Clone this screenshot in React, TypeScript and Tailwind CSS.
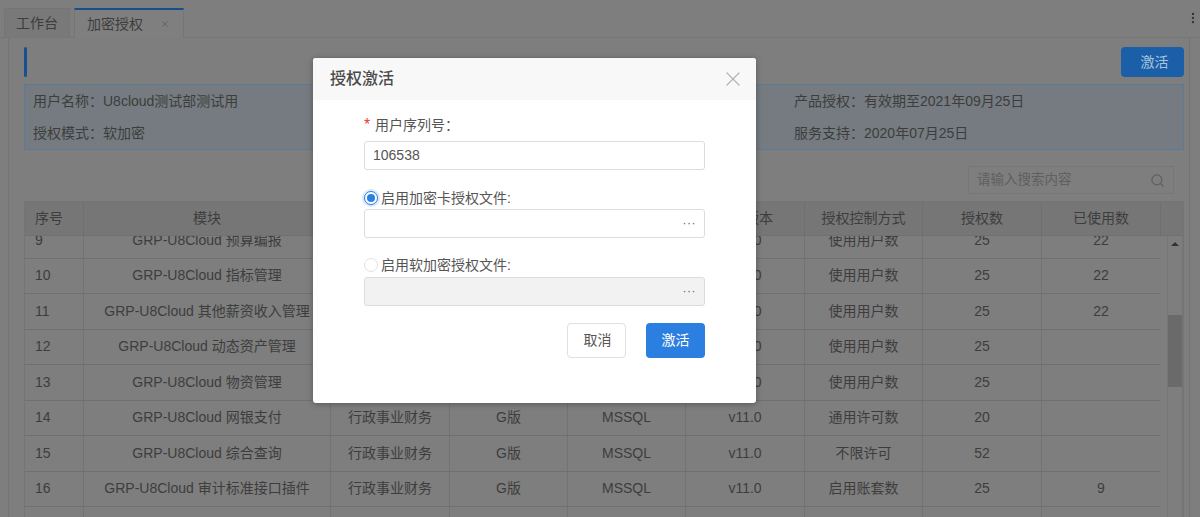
import { MoreVertical, Search, X } from "lucide-react";

const COLS = "grid grid-cols-[59px_247px_119px_118px_118px_119px_118px_119px_119px]";

const rows = [
  { no: "9", name: "GRP-U8Cloud 预算编报", ctrl: "使用用户数", total: "25", used: "22" },
  { no: "10", name: "GRP-U8Cloud 指标管理", ctrl: "使用用户数", total: "25", used: "22" },
  { no: "11", name: "GRP-U8Cloud 其他薪资收入管理", ctrl: "使用用户数", total: "25", used: "22" },
  { no: "12", name: "GRP-U8Cloud 动态资产管理", ctrl: "使用用户数", total: "25", used: "" },
  { no: "13", name: "GRP-U8Cloud 物资管理", ctrl: "使用用户数", total: "25", used: "" },
  { no: "14", name: "GRP-U8Cloud 网银支付", ctrl: "通用许可数", total: "20", used: "" },
  { no: "15", name: "GRP-U8Cloud 综合查询", ctrl: "不限许可", total: "52", used: "" },
  { no: "16", name: "GRP-U8Cloud 审计标准接口插件", ctrl: "启用账套数", total: "25", used: "9" },
];

const headers = ["模块", "行业", "版别", "数据库", "产品版本", "授权控制方式", "授权数", "已使用数"];

function Cell({ children }: { children?: React.ReactNode }) {
  return (
    <div className="flex items-center justify-center border-r border-[#737373] whitespace-nowrap">
      {children}
    </div>
  );
}

function FileInput({ disabled }: { disabled?: boolean }) {
  return (
    <div
      className={`h-[29px] rounded-[3px] border border-[#dcdcdc] flex items-center justify-end pr-[8px] text-[#666] leading-none ${
        disabled ? "bg-[#f2f2f2]" : "bg-white"
      }`}
    >
      <span className="text-[12px] tracking-[0.5px] mb-[2px]">···</span>
    </div>
  );
}

export default function App() {
  return (
    <div className="relative w-[1200px] h-[517px] overflow-hidden bg-[#7e7e7e] text-[14px] text-[#3d3d3d] font-['Liberation_Sans','Noto_Sans_CJK_SC',sans-serif]">
      {/* 页签 */}
      <div className="h-[38px] flex items-end pl-[4px] border-b border-[#767676] relative">
        <div className="w-[66px] h-[29px] flex items-center justify-center bg-[#797979] border border-[#757575] border-b-0">
          工作台
        </div>
        <div className="ml-[4px] w-[110px] h-[30px] flex items-center pl-[12px] bg-[#7f7f7f] border-x border-[#757575] border-t-2 border-t-[#174f8c] -mb-px">
          加密授权
          <X size={10} className="ml-[17px] text-[#5f5f5f]" />
        </div>
        <MoreVertical size={14} className="absolute right-0 top-[11px] text-[#333]" />
      </div>

      {/* 内容 */}
      <div className="ml-[8px] mr-[10px] h-[479px] border-l border-r border-[#747474] px-[15px] pr-[5px]">
        <div className="h-[46px] pt-[9px] flex justify-between">
          <div className="w-[3px] h-[30px] bg-[#16508f] rounded-sm" />
          <button className="w-[63px] h-[30px] pl-[4px] rounded-[4px] bg-[#1a5fa8] text-[#a9c3de]">激活</button>
        </div>

        <div className="h-[66px] border border-[#5d7a96] bg-[#757b80] pl-[8px] grid grid-cols-[761px_1fr] grid-rows-2 items-center">
          <div>用户名称：U8cloud测试部测试用</div>
          <div>产品授权：有效期至2021年09月25日</div>
          <div>授权模式：软加密</div>
          <div>服务支持：2020年07月25日</div>
        </div>

        <div className="h-[51px] flex items-start justify-end pt-[16px] pr-[10px]">
          <div className="w-[206px] h-[28px] border border-[#767676] rounded-[2px] flex items-center justify-between pl-[8px] pr-[8px] text-[#5f5f5f]">
            <span className="text-[13.5px]">请输入搜索内容</span>
            <Search size={15} />
          </div>
        </div>

        {/* 表格 */}
        <div className="border border-[#747474] w-[1160px]">
          <div className="flex h-[34px] bg-[#767676] border-b border-[#707070]">
            <div className={`${COLS} w-[1135px] shrink-0`}>
              <div className="flex items-center pl-[10px] border-r border-[#6f6f6f]">序号</div>
              {headers.map((h) => (
                <div key={h} className="flex items-center justify-center border-r border-[#6f6f6f]">
                  {h}
                </div>
              ))}
            </div>
          </div>
          <div className="flex h-[282px] overflow-hidden">
            <div className="w-[1135px] shrink-0 overflow-hidden">
              <div className="-mt-[13px]">
                {rows.map((r) => (
                  <div key={r.no} className={`${COLS} h-[35.5px] border-b border-[#707070]`}>
                    <div className="flex items-center pl-[10px] border-r border-[#737373]">{r.no}</div>
                    <Cell>{r.name}</Cell>
                    <Cell>行政事业财务</Cell>
                    <Cell>G版</Cell>
                    <Cell>MSSQL</Cell>
                    <Cell>v11.0</Cell>
                    <Cell>{r.ctrl}</Cell>
                    <Cell>{r.total}</Cell>
                    <Cell>{r.used}</Cell>
                  </div>
                ))}
                <div className={`${COLS} h-[35.5px]`}>
                  <Cell />
                  <Cell />
                  <Cell />
                  <Cell />
                  <Cell />
                  <Cell />
                  <Cell />
                  <Cell />
                  <Cell />
                </div>
              </div>
            </div>
            {/* 滚动条 */}
            <div className="ml-[7px] w-[16px] border-x border-[#767676] flex flex-col items-center pt-[6px]">
              <div className="w-0 h-0 border-x-[4px] border-x-transparent border-b-[4px] border-b-[#333]" />
              <div className="w-[14px] h-[72px] mt-[69px] bg-[#6a6a6a]" />
            </div>
          </div>
        </div>
      </div>

      {/* 弹窗 */}
      <div className="absolute left-[313px] top-[58px] w-[443px] h-[345px] bg-white rounded-[3px] shadow-[0_1px_6px_rgba(0,0,0,0.3)] overflow-hidden text-[#555]">
        <div className="h-[42px] bg-[#f8f8f8] flex items-center justify-between pl-[17px] pr-[11px]">
          <span className="text-[16px] font-medium text-[#4a4a4a]">授权激活</span>
          <X size={24} strokeWidth={1.25} className="text-[#b5b5b5]" />
        </div>
        <div className="ml-[51px] w-[341px]">
          <div className="mt-[16px] h-[18px] flex items-center">
            <span className="w-[11px] text-[16px] text-[#e2402f]">*</span>
            用户序列号：
          </div>
          <div className="mt-[7px] h-[29px] rounded-[3px] border border-[#dcdcdc] flex items-center pl-[8px]">
            106538
          </div>

          <div className="mt-[19px] h-[18px] flex items-center">
            <span className="w-[14px] h-[14px] rounded-full border border-[#2b7fe0] bg-white ring-2 ring-[#d9e8fa] flex items-center justify-center">
              <span className="w-[8px] h-[8px] rounded-full bg-[#2b7fe0]" />
            </span>
            <span className="ml-[3px]">启用加密卡授权文件:</span>
          </div>
          <div className="mt-[2px]">
            <FileInput />
          </div>

          <div className="mt-[18px] h-[18px] flex items-center">
            <span className="w-[14px] h-[14px] rounded-full border border-[#e2e2e2] bg-white" />
            <span className="ml-[3px]">启用软加密授权文件:</span>
          </div>
          <div className="mt-[3px]">
            <FileInput disabled />
          </div>

          <div className="mt-[17px] flex justify-end gap-[20px]">
            <button className="w-[59px] h-[35px] pl-[2px] rounded-[4px] border border-[#e0e0e0] bg-white text-[#555]">取消</button>
            <button className="w-[59px] h-[35px] rounded-[4px] bg-[#2b7fe0] text-white">激活</button>
          </div>
        </div>
      </div>
    </div>
  );
}
